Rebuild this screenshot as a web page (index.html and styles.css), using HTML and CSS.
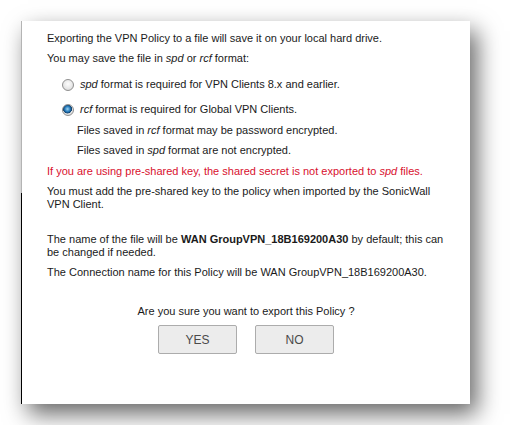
FILE: index.html
```html
<!DOCTYPE html>
<html lang="en">
<head>
    <meta charset="UTF-8">
    <title>Export VPN Policy</title>
    <link rel="stylesheet" href="styles.css">
</head>
<body>
    <div class="dialog">
        <p>Exporting the VPN Policy to a file will save it on your local hard drive.</p>
        <p>You may save the file in <em>spd</em> or <em>rcf</em> format:</p>

        <label class="option">
            <input type="radio" name="format" value="spd">
            <span><em>spd</em> format is required for VPN Clients 8.x and earlier.</span>
        </label>
        <label class="option">
            <input type="radio" name="format" value="rcf" checked>
            <span><em>rcf</em> format is required for Global VPN Clients.</span>
        </label>

        <p class="note">Files saved in <em>rcf</em> format may be password encrypted.</p>
        <p class="note">Files saved in <em>spd</em> format are not encrypted.</p>

        <p class="warning">If you are using pre-shared key, the shared secret is not exported to <em>spd</em> files.</p>
        <p>You must add the pre-shared key to the policy when imported by the SonicWall VPN Client.</p>

        <p class="spaced">The name of the file will be <strong>WAN GroupVPN_18B169200A30</strong> by default; this can be changed if needed.</p>
        <p>The Connection name for this Policy will be WAN GroupVPN_18B169200A30.</p>

        <div class="confirm">
            <p>Are you sure you want to export this Policy ?</p>
            <div class="buttons">
                <button type="button">YES</button>
                <button type="button">NO</button>
            </div>
        </div>
    </div>
</body>
</html>
```

FILE: styles.css
```css
body {
    margin: 0;
    padding: 21px;
    background-color: #fff;
    font-family: "Liberation Sans", Arial, sans-serif;
    font-size: 11px;
    color: #1a1a1a;
}

.dialog {
    width: 449px;
    height: 383px;
    box-sizing: border-box;
    padding: 11px 25px 0 25px;
    background-color: #fff;
    border-left: 1px solid #000;
    border-image: linear-gradient(to bottom, #b4b4b4 172px, #000 172px) 1;
    box-shadow: 7px 10px 22px rgba(0, 0, 0, 0.6);
}

p {
    margin: 0 0 7px;
    line-height: 13px;
}

.option {
    display: flex;
    align-items: center;
    gap: 6px;
    margin: 13px 0 0 15px;
    line-height: 13px;
}

.option + .option {
    margin-top: 12px;
}

.option input {
    appearance: none;
    -webkit-appearance: none;
    width: 12px;
    height: 12px;
    margin: 0;
    border: 1px solid #8f8f8f;
    border-radius: 50%;
    background: radial-gradient(circle at 50% 40%, #fdfdfd 0, #e8e8e8 55%, #cfcfcf 100%);
}

.option input:checked {
    background: radial-gradient(circle at 45% 40%, #9fd4f2 0, #2a7fbf 32%, #0e3f6b 52%, #e6e6e6 58%, #d0d0d0 100%);
}

.option + .note {
    margin-top: 8px;
}

.note {
    padding-left: 30px;
}

.warning {
    color: #d8102e;
    margin-top: 8px;
}

.spaced {
    margin-top: 22px;
}

.confirm {
    margin-top: 26px;
    text-align: center;
}

.confirm p {
    margin-bottom: 7px;
}

.buttons {
    display: flex;
    justify-content: center;
    gap: 18px;
}

button {
    width: 79px;
    height: 29px;
    font-family: "Liberation Sans", Arial, sans-serif;
    font-size: 12px;
    color: #4a4a4a;
    background-color: #ececec;
    border: 1px solid #acacac;
    border-radius: 2px;
}
```
